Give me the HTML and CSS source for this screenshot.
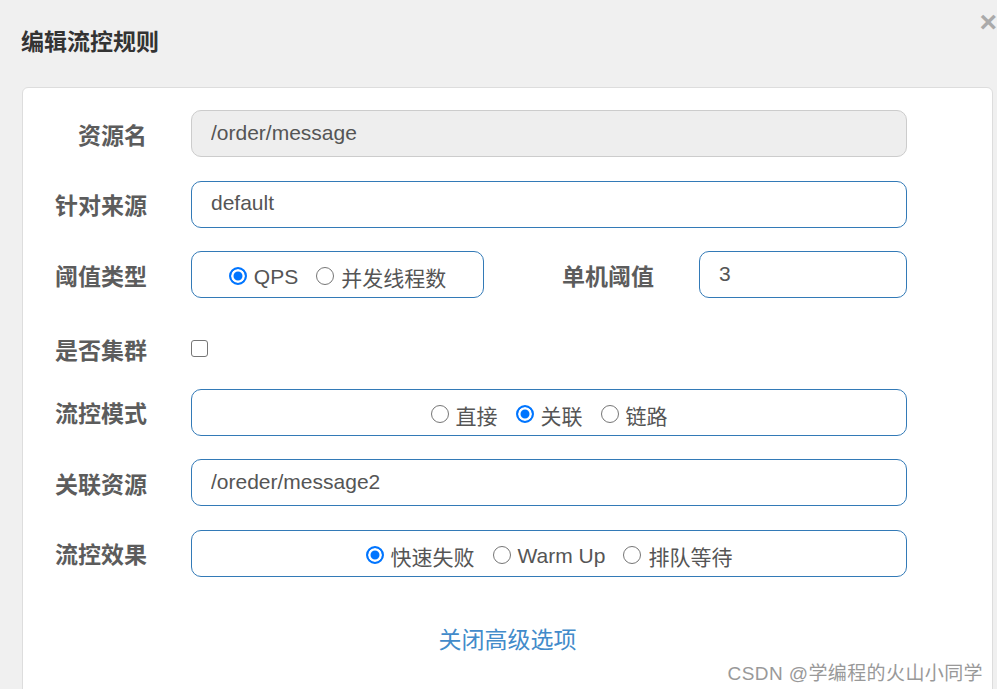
FILE: index.html
```
<!DOCTYPE html>
<html lang="zh-CN">
<head>
    <meta charset="UTF-8">
    <title>编辑流控规则</title>
    <link rel="stylesheet" href="styles.css">
</head>
<body>
    <div class="modal">
        <div class="modal-header">
            <h4 class="modal-title">编辑流控规则</h4>
            <span class="close">×</span>
        </div>
        <div class="panel">
            <div class="form-row">
                <label class="row-label">资源名</label>
                <input type="text" class="field" value="/order/message" disabled>
            </div>
            <div class="form-row">
                <label class="row-label">针对来源</label>
                <input type="text" class="field" value="default">
            </div>
            <div class="form-row">
                <label class="row-label">阈值类型</label>
                <div class="split">
                    <div class="radio-box radio-small">
                        <label class="radio"><input type="radio" name="grade" checked>QPS</label>
                        <label class="radio"><input type="radio" name="grade">并发线程数</label>
                    </div>
                    <label class="row-label inline-label">单机阈值</label>
                    <input type="text" class="field" value="3">
                </div>
            </div>
            <div class="form-row row-check">
                <label class="row-label">是否集群</label>
                <div><input type="checkbox" class="check"></div>
            </div>
            <div class="form-row">
                <label class="row-label">流控模式</label>
                <div class="radio-box">
                    <label class="radio"><input type="radio" name="strategy">直接</label>
                    <label class="radio"><input type="radio" name="strategy" checked>关联</label>
                    <label class="radio"><input type="radio" name="strategy">链路</label>
                </div>
            </div>
            <div class="form-row">
                <label class="row-label">关联资源</label>
                <input type="text" class="field" value="/oreder/message2">
            </div>
            <div class="form-row">
                <label class="row-label">流控效果</label>
                <div class="radio-box">
                    <label class="radio"><input type="radio" name="behavior" checked>快速失败</label>
                    <label class="radio"><input type="radio" name="behavior">Warm Up</label>
                    <label class="radio"><input type="radio" name="behavior">排队等待</label>
                </div>
            </div>
            <div class="advanced">
                <a href="#" class="advanced-link">关闭高级选项</a>
            </div>
        </div>
    </div>
    <div class="watermark">CSDN @学编程的火山小同学</div>
</body>
</html>
```

FILE: styles.css
```
body {
    margin: 0;
    padding: 0;
    background: #f0f0f0;
    font-family: "Liberation Sans", "Noto Sans CJK SC", sans-serif;
    color: #555;
    height: 689px;
    overflow: hidden;
    position: relative;
}
.modal-header {
    height: 87px;
    box-sizing: border-box;
    padding: 28px 0 0 21px;
    position: relative;
}
.modal-title {
    margin: 0;
    font-family: "Noto Sans CJK SC", sans-serif;
    font-size: 23px;
    line-height: 24px;
    font-weight: bold;
    color: #333;
}
.close {
    position: absolute;
    top: 7px;
    right: 0;
    font-size: 30px;
    font-weight: bold;
    color: #aaa;
    line-height: 30px;
}
.panel {
    margin-left: 22px;
    width: 969px;
    background: #fff;
    border: 1px solid #ddd;
    border-radius: 6px;
    padding: 22px 0 60px;
}
.form-row {
    display: grid;
    grid-template-columns: 124px 716px;
    column-gap: 44px;
    align-items: center;
    height: 47px;
    margin-bottom: 23.5px;
}
.row-check {
    height: 54px;
    margin-bottom: 13px;
}
.row-label {
    text-align: right;
    font-family: "Noto Sans CJK SC", sans-serif;
    font-size: 23px;
    font-weight: bold;
    color: #5c5c5c;
}
.field {
    box-sizing: border-box;
    width: 100%;
    height: 47px;
    padding: 0 19px 2px;
    border: 1px solid #337ab7;
    border-radius: 10px;
    font-family: "Liberation Sans", "Noto Sans CJK SC", sans-serif;
    font-size: 21px;
    color: #555;
    background: #fff;
    outline: none;
}
.field:disabled {
    background: #eee;
    border-color: #ccc;
}
.split {
    display: flex;
    align-items: center;
}
.split .field {
    flex: 1;
}
.radio-small {
    width: 293px;
    flex: none;
}
.inline-label {
    width: 92px;
    margin: 0 45px 0 78px;
    text-align: left;
}
.radio-box {
    box-sizing: border-box;
    height: 47px;
    border: 1px solid #337ab7;
    border-radius: 10px;
    display: flex;
    align-items: center;
    justify-content: center;
    gap: 18px;
    padding-top: 5px;
}
.radio {
    display: flex;
    align-items: center;
    font-size: 21px;
    color: #555;
    font-family: "Liberation Sans", "Noto Sans CJK SC", sans-serif;
}
.radio input {
    appearance: none;
    box-sizing: border-box;
    flex: none;
    width: 18px;
    height: 18px;
    margin: 0 7px 0 0;
    border: 1.5px solid #767676;
    border-radius: 50%;
    background: #fff;
    position: relative;
    top: -1px;
}
.radio input:checked {
    border: 2px solid #0075ff;
    background: #0075ff;
    box-shadow: inset 0 0 0 2.5px #fff;
}
.check {
    appearance: none;
    box-sizing: border-box;
    width: 17px;
    height: 17px;
    margin: 0;
    display: block;
    border: 1.5px solid #767676;
    border-radius: 3px;
    background: #fff;
}
.advanced {
    text-align: center;
    padding-top: 21px;
}
.advanced-link {
    font-family: "Noto Sans CJK SC", sans-serif;
    font-size: 23px;
    color: #428bca;
    text-decoration: none;
}
.watermark {
    position: absolute;
    right: 14px;
    bottom: 4px;
    font-family: "Liberation Sans", "Noto Sans CJK SC", sans-serif;
    font-size: 19px;
    color: #999;
    letter-spacing: 0.4px;
}
```
